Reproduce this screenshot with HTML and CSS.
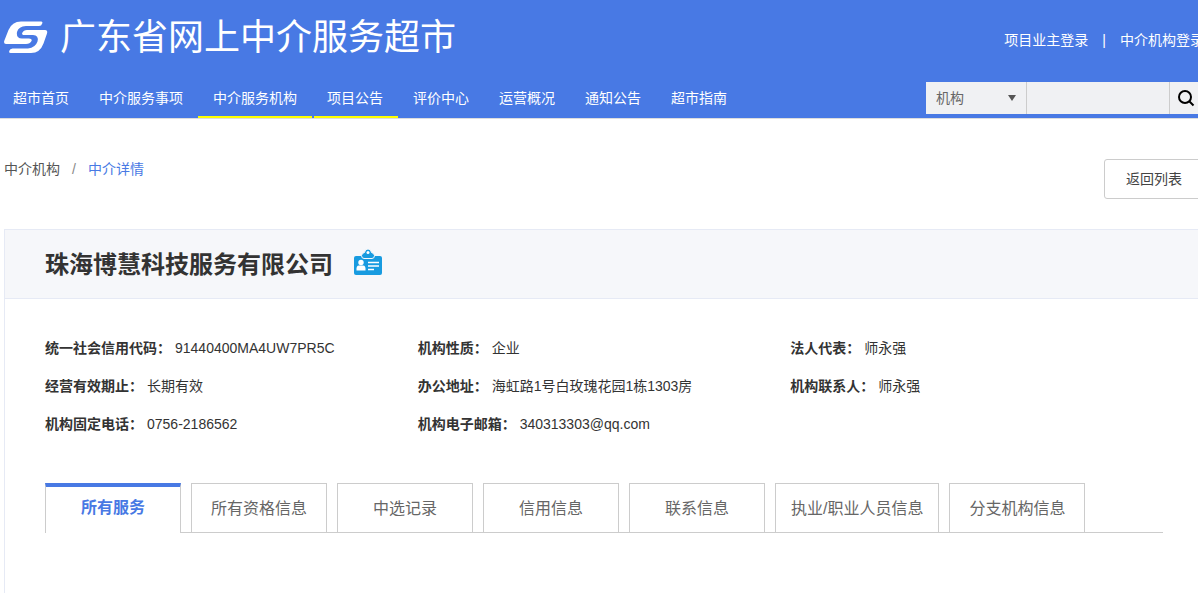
FILE: index.html
```
<!DOCTYPE html>
<html lang="zh-CN">

<head>
    <title>广东省网上中介服务超市</title>
    <meta charset="UTF-8">
    <meta name="viewport" content="width=device-width, initial-scale=1.0">
    <link rel="stylesheet" href="styles.css">
</head>

<body>
    <header class="header">
        <div class="wrap">
            <div class="header-top">
                <a class="logo" href="#">
                    <svg class="logo-icon" width="44" height="34" viewBox="0 0 44 34" aria-hidden="true">
                        <path fill="#fff" d="M17 0.500H37Q39 0.500 38.200 2.500Q37.500 5 35 5H22Q14.500 5.500 13 11Q12 17.500 18 17.500H25Q28.500 17.500 27.500 20Q26 23 22 23H2Q-0.500 23 0.200 20L4.500 9Q8 0.500 17 0.500Z" />
                        <path fill="#fff" d="M23 9H41Q44 9 43 12.500L39.500 22.500Q36 32 27 32H6.500Q4.500 32 5.200 30Q6 27.500 8.500 27.500H24Q31.500 26.500 33.500 20.500Q35 14 29 14H20.500Q17.500 14 18.200 12Q19.500 9 23 9Z" />
                    </svg>
                    <span>广东省网上中介服务超市</span>
                </a>
                <div class="login">
                    <a href="#">项目业主登录</a>
                    <span>|</span>
                    <a href="#">中介机构登录</a>
                </div>
            </div>
            <div class="header-bottom">
                <nav class="nav">
                    <a href="#">超市首页</a>
                    <a href="#">中介服务事项</a>
                    <a class="active" href="#">中介服务机构</a>
                    <a class="active next" href="#">项目公告</a>
                    <a href="#">评价中心</a>
                    <a href="#">运营概况</a>
                    <a href="#">通知公告</a>
                    <a href="#">超市指南</a>
                </nav>
                <form class="search">
                    <div class="search-type">
                        <select aria-label="搜索类型">
                            <option>机构</option>
                        </select>
                    </div>
                    <input type="text" aria-label="搜索内容">
                    <button type="button" aria-label="搜索">
                        <svg width="18" height="18" viewBox="0 0 18 18" aria-hidden="true">
                            <circle cx="8" cy="8" r="6" fill="none" stroke="#000" stroke-width="2" />
                            <path d="M12 12L16.500 16.500" stroke="#000" stroke-width="2" />
                        </svg>
                    </button>
                </form>
            </div>
        </div>
    </header>

    <main class="wrap main">
        <div class="toolbar">
            <div class="crumbs">
                <a href="#">中介机构</a>
                <span>/</span>
                <a class="current" href="#">中介详情</a>
            </div>
            <button class="back" type="button">返回列表</button>
        </div>

        <section class="card">
            <div class="card-title">
                <h1>珠海博慧科技服务有限公司</h1>
                <svg width="28" height="30" viewBox="0 0 28 30" aria-hidden="true">
                    <rect x="0" y="7" width="28" height="19" rx="2" fill="#189be0" />
                    <path d="M7.500 6.500Q8 4 10.500 3.500Q11 0 14 0Q17 0 17.500 3.500Q20 4 20.500 6.500Q20.500 9.500 18 9.500H10Q7.500 9.500 7.500 6.500Z" fill="#189be0" stroke="#f6f7fa" stroke-width="1" />
                    <circle cx="14" cy="3.500" r="1.500" fill="#fff" />
                    <circle cx="7" cy="13.500" r="2.700" fill="#fff" />
                    <path d="M2.500 21.500Q2 16.500 5 16.500H9Q12 16.500 11.500 21.500Z" fill="#fff" />
                    <path d="M14 13.500H25M14 17H25M14 20.500H20" stroke="#fff" stroke-width="1.500" />
                </svg>
            </div>

            <div class="card-body">
                <dl class="info">
                    <div><dt>统一社会信用代码：</dt><dd>91440400MA4UW7PR5C</dd></div>
                    <div><dt>机构性质：</dt><dd>企业</dd></div>
                    <div><dt>法人代表：</dt><dd>师永强</dd></div>
                    <div><dt>经营有效期止：</dt><dd>长期有效</dd></div>
                    <div><dt>办公地址：</dt><dd>海虹路1号白玫瑰花园1栋1303房</dd></div>
                    <div><dt>机构联系人：</dt><dd>师永强</dd></div>
                    <div><dt>机构固定电话：</dt><dd>0756-2186562</dd></div>
                    <div><dt>机构电子邮箱：</dt><dd>340313303@qq.com</dd></div>
                </dl>

                <div class="tabs">
                    <button class="active" type="button">所有服务</button>
                    <button type="button">所有资格信息</button>
                    <button type="button">中选记录</button>
                    <button type="button">信用信息</button>
                    <button type="button">联系信息</button>
                    <button type="button">执业/职业人员信息</button>
                    <button type="button">分支机构信息</button>
                </div>
            </div>
        </section>
    </main>
</body>

</html>
```
FILE: styles.css
```
* {
    box-sizing: border-box;
}

body {
    display: flex;
    flex-direction: column;
    min-height: 100vh;
    margin: 0;
    overflow-x: hidden;
    font-family: "Liberation Sans", "Noto Sans CJK SC", sans-serif;
    font-size: 14px;
    line-height: 20px;
    color: #333;
    background-color: #fff;
}

a {
    color: inherit;
    text-decoration: none;
}

button,
input,
select {
    margin: 0;
    font: inherit;
    color: inherit;
    border: none;
    border-radius: 0;
}

button {
    cursor: pointer;
}

.wrap {
    min-width: 1200px;
    margin-left: 4px;
}

/* header */
.header {
    border-bottom: 1px solid #ddd;
    color: #fff;
    background-color: #4879e4;
}

.header-top {
    display: flex;
    justify-content: space-between;
    align-items: center;
    height: 78px;
    padding-top: 2px;
}

.logo {
    display: flex;
    align-items: center;
    gap: 12px;
    padding-bottom: 4px;
    font-size: 36px;
    line-height: 48px;
}

.login {
    display: flex;
    gap: 14px;
}

.header-bottom {
    display: flex;
    justify-content: space-between;
    height: 40px;
}

.nav {
    display: flex;
    margin-left: -6px;
}

.nav a {
    padding: 0 15px;
    line-height: 40px;
}

.nav .active {
    background: linear-gradient(#ff0, #ff0) right bottom / 100% 2px no-repeat;
}

.nav .next {
    background-size: calc(100% - 2px) 2px;
}

.search {
    display: flex;
    width: 278px;
    height: 32px;
    margin-top: 4px;
    color: #666;
    background-color: #f0f1f3;
}

.search-type {
    position: relative;
    width: 101px;
    border-right: 1px solid #ccc;
}

.search-type::after {
    content: "";
    position: absolute;
    top: 13px;
    right: 10px;
    border: 4px solid transparent;
    border-top: 6px solid #555;
    border-bottom: none;
    pointer-events: none;
}

.search select {
    width: 100%;
    height: 100%;
    padding: 0 10px;
    background: none;
    appearance: none;
}

.search input {
    flex: 1;
    min-width: 0;
    padding: 0 10px;
    background: none;
}

.search button {
    display: flex;
    align-items: center;
    width: 35px;
    padding: 0 7px;
    border-left: 1px solid #ccc;
    background: none;
}

/* content */
.main {
    display: flex;
    flex: 1;
    flex-direction: column;
}

.toolbar {
    display: flex;
    justify-content: space-between;
    padding: 40px 0 30px;
}

.crumbs {
    display: flex;
    gap: 12px;
    color: #555;
}

.crumbs span {
    color: #888;
}

.crumbs .current {
    color: #4879e4;
}

.back {
    width: 100px;
    height: 40px;
    border: 1px solid #ccc;
    border-radius: 3px;
    color: #444;
    background-color: #fff;
}

.card {
    flex: 1;
    border: 1px solid #e6eaf5;
    border-bottom: none;
}

.card-title {
    display: flex;
    align-items: center;
    gap: 21px;
    height: 69px;
    padding: 0 40px;
    border-bottom: 1px solid #e6eaf5;
    background-color: #f6f7fa;
}

.card-title h1 {
    margin: 0;
    padding-top: 2px;
    font-size: 24px;
    line-height: 36px;
}

.card-body {
    padding: 30px 40px;
}

.info {
    display: grid;
    grid-template-columns: repeat(3, 1fr);
    margin: 0 0 40px;
    line-height: 38px;
}

.info div {
    display: flex;
    gap: 4px;
}

.info dt {
    font-weight: bold;
}

.info dd {
    margin: 0;
}

.tabs {
    display: flex;
    gap: 10px;
    height: 50px;
    border-bottom: 1px solid #ccc;
}

.tabs button {
    min-width: 136px;
    padding: 2px 15px 0;
    border: 1px solid #ccc;
    border-bottom: none;
    font-size: 16px;
    color: #666;
    background-color: #fff;
}

.tabs .active {
    height: 50px;
    padding: 0 15px 4px;
    border-top: 4px solid #4879e4;
    font-weight: bold;
    color: #4879e4;
}
```
